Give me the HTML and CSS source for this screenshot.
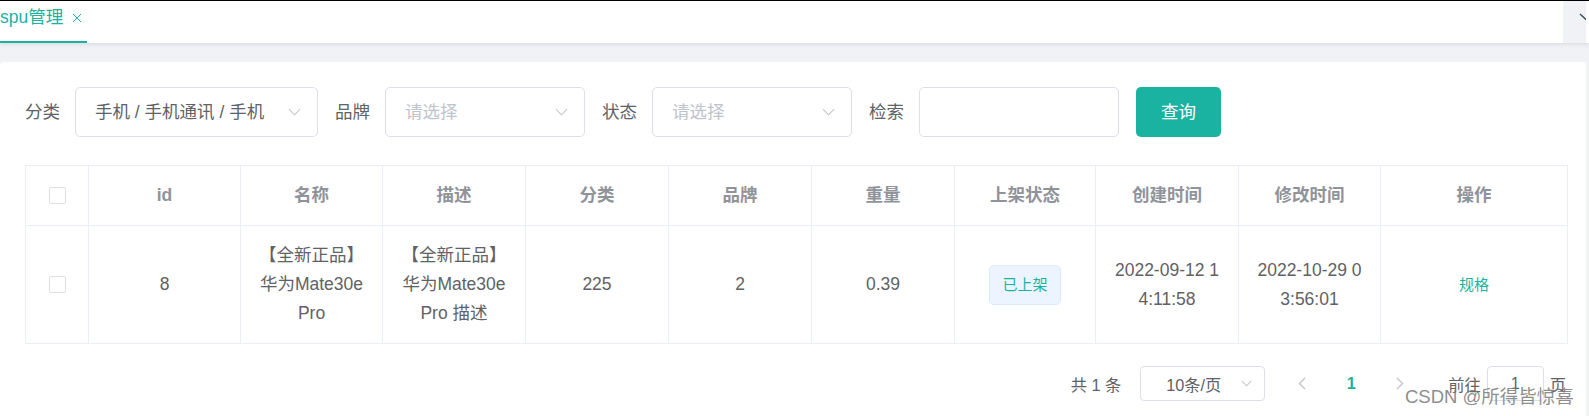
FILE: index.html
```html
<!DOCTYPE html>
<html lang="zh-CN">
<head>
  <meta charset="UTF-8">
  <meta name="viewport" content="width=device-width, initial-scale=1.0">
  <title>spu管理</title>
  <link rel="stylesheet" href="styles.css">
</head>
<body>
  <div class="tags-bar">
    <div class="tags-list">
      <span class="tag-item active">spu管理
        <svg class="tag-close" viewBox="0 0 10 10"><path d="M1 1L9 9M9 1L1 9"/></svg>
      </span>
    </div>
    <div class="tags-tool">
      <svg viewBox="0 0 23 42"><path d="M17 13L24 19.5"/></svg>
    </div>
  </div>

  <div class="app-main">
    <div class="page-card">
      <div class="search-form">
        <div class="form-item">
          <label class="form-label">分类</label>
          <div class="select select-wide">
            <span class="select-value">手机 / 手机通讯 / 手机</span>
            <svg class="select-arrow" viewBox="0 0 14 8"><path d="M1 1L7 7L13 1"/></svg>
          </div>
        </div>
        <div class="form-item">
          <label class="form-label">品牌</label>
          <div class="select">
            <span class="placeholder">请选择</span>
            <svg class="select-arrow" viewBox="0 0 14 8"><path d="M1 1L7 7L13 1"/></svg>
          </div>
        </div>
        <div class="form-item">
          <label class="form-label">状态</label>
          <div class="select">
            <span class="placeholder">请选择</span>
            <svg class="select-arrow" viewBox="0 0 14 8"><path d="M1 1L7 7L13 1"/></svg>
          </div>
        </div>
        <div class="form-item">
          <label class="form-label">检索</label>
          <div class="text-input"></div>
        </div>
        <button class="btn-primary" type="button">查询</button>
      </div>

      <table class="data-table">
        <colgroup>
          <col style="width: 63px">
          <col style="width: 152px">
          <col style="width: 142px">
          <col style="width: 143px">
          <col style="width: 143px">
          <col style="width: 143px">
          <col style="width: 143px">
          <col style="width: 141px">
          <col style="width: 143px">
          <col style="width: 142px">
          <col>
        </colgroup>
        <thead>
          <tr>
            <th><span class="checkbox"></span></th>
            <th>id</th>
            <th>名称</th>
            <th>描述</th>
            <th>分类</th>
            <th>品牌</th>
            <th>重量</th>
            <th>上架状态</th>
            <th>创建时间</th>
            <th>修改时间</th>
            <th>操作</th>
          </tr>
        </thead>
        <tbody>
          <tr>
            <td><span class="checkbox"></span></td>
            <td>8</td>
            <td>【全新正品】华为Mate30e Pro</td>
            <td>【全新正品】华为Mate30e Pro 描述</td>
            <td>225</td>
            <td>2</td>
            <td>0.39</td>
            <td><span class="status-tag">已上架</span></td>
            <td>2022-09-12 14:11:58</td>
            <td>2022-10-29 03:56:01</td>
            <td><a class="link-btn">规格</a></td>
          </tr>
        </tbody>
      </table>

      <div class="pagination">
        <span class="total">共 1 条</span>
        <div class="size-select">
          <span>10条/页</span>
          <svg class="size-arrow" viewBox="0 0 12 7"><path d="M1 1L6 6L11 1"/></svg>
        </div>
        <button class="page-btn" type="button" disabled>
          <svg viewBox="0 0 8 13"><path d="M7 1L1.5 6.5L7 12"/></svg>
        </button>
        <span class="pager-num active">1</span>
        <button class="page-btn" type="button" disabled>
          <svg viewBox="0 0 8 13"><path d="M1 1L6.5 6.5L1 12"/></svg>
        </button>
        <span class="jumper">前往</span>
        <div class="jump-input">1</div>
        <span class="jump-unit">页</span>
      </div>
    </div>
  </div>

  <div class="watermark">CSDN @所得皆惊喜</div>
</body>
</html>
```

FILE: styles.css
```css
* {
  box-sizing: border-box;
}

body {
  margin: 0;
  height: 416px;
  overflow: hidden;
  border-top: 1px solid #000;
  background: #f0f2f5;
  font-family: "Liberation Sans", "Noto Sans CJK SC", sans-serif;
  color: #606266;
  position: relative;
}

/* tags view */
.tags-bar {
  display: flex;
  height: 42px;
  background: #fff;
  box-shadow: 0 1px 4px rgba(0, 21, 41, 0.12);
  position: relative;
  z-index: 1;
}

.tags-list {
  flex: 1;
}

.tag-item {
  display: inline-flex;
  align-items: center;
  height: 42px;
  padding: 0 5px 7px 0;
  border-bottom: 2px solid #1ab3a1;
  color: #1ab3a1;
  font-size: 17.5px;
  line-height: 33px;
}

.tag-close {
  width: 10px;
  height: 10px;
  margin-left: 9px;
  fill: none;
  stroke: #1ab3a1;
  stroke-width: 1;
}

.tags-tool {
  width: 23px;
  margin-right: 3px;
  background: #f0f2f5;
}

.tags-tool svg {
  display: block;
  width: 23px;
  height: 42px;
  fill: none;
  stroke: #3d4b5e;
  stroke-width: 1.4;
}

/* main card */
.app-main {
  width: 1586px;
  padding-top: 19px;
}

.page-card {
  height: 354px;
  background: #fff;
  border-radius: 4px 4px 0 0;
  padding: 25px 18px 0 25px;
}

.search-form {
  display: flex;
  align-items: center;
  margin-bottom: 28px;
}

.form-item {
  display: flex;
  align-items: center;
  margin-right: 17px;
}

.form-label {
  padding-right: 15px;
  font-size: 17.5px;
  line-height: 50px;
  color: #606266;
}

.select,
.text-input {
  width: 200px;
  height: 50px;
  border: 1px solid #dcdfe6;
  border-radius: 5px;
  background: #fff;
}

.select {
  display: flex;
  align-items: center;
  justify-content: space-between;
  padding: 0 16px 0 19px;
  font-size: 17.5px;
  line-height: 48px;
}

.select-wide {
  width: 243px;
}

.select-value {
  color: #606266;
  white-space: nowrap;
}

.placeholder {
  color: #c0c4cc;
}

.select-arrow {
  width: 13px;
  height: 8px;
  fill: none;
  stroke: #c0c4cc;
  stroke-width: 1.2;
}

.btn-primary {
  height: 50px;
  padding: 0 25px;
  border: none;
  border-radius: 5px;
  background: #1ab3a1;
  color: #fff;
  font-family: inherit;
  font-size: 17.5px;
  line-height: 50px;
}

/* table */
.data-table {
  width: 1543px;
  table-layout: fixed;
  border-collapse: separate;
  border-spacing: 0;
  border-top: 1px solid #ebeef5;
  border-left: 1px solid #ebeef5;
  font-size: 17.5px;
}

.data-table th,
.data-table td {
  padding: 15px 15px;
  border-right: 1px solid #ebeef5;
  border-bottom: 1px solid #ebeef5;
  line-height: 29px;
  text-align: center;
  word-break: break-all;
}

.data-table th {
  color: #909399;
  font-weight: bold;
}

.data-table td {
  color: #606266;
}

.data-table th:first-child,
.data-table td:first-child {
  padding: 15px 0;
}

.checkbox {
  display: inline-block;
  width: 17px;
  height: 17px;
  border: 1px solid #dcdfe6;
  border-radius: 2px;
  background: #fff;
  vertical-align: middle;
  position: relative;
  top: -1px;
}

.status-tag {
  display: inline-block;
  height: 40px;
  padding: 0 12px;
  border: 1px solid #d9ecff;
  border-radius: 5px;
  background: #ecf5ff;
  color: #1ab3a1;
  font-size: 15px;
  line-height: 38px;
  white-space: nowrap;
}

.link-btn {
  color: #1ab3a1;
  font-size: 15px;
}

/* pagination */
.pagination {
  display: flex;
  align-items: center;
  justify-content: flex-end;
  height: 35px;
  margin-top: 22px;
  padding-right: 2px;
  font-size: 16.25px;
  color: #606266;
}

.total {
  margin-right: 19px;
  white-space: nowrap;
}

.size-select {
  display: flex;
  align-items: center;
  width: 125px;
  height: 35px;
  margin-right: 15px;
  padding: 0 12px 0 25px;
  border: 1px solid #dcdfe6;
  border-radius: 4px;
  justify-content: space-between;
}

.size-arrow {
  width: 11px;
  height: 7px;
  fill: none;
  stroke: #c0c4cc;
  stroke-width: 1.1;
}

.page-btn {
  display: flex;
  align-items: center;
  justify-content: center;
  width: 44px;
  height: 35px;
  padding: 0;
  border: none;
  background: #fff;
}

.page-btn svg {
  width: 8px;
  height: 13px;
  fill: none;
  stroke: #c0c4cc;
  stroke-width: 1.4;
}

.pager-num {
  width: 44px;
  margin: 0 5px;
  text-align: center;
  font-weight: bold;
  line-height: 35px;
}

.pager-num.active {
  color: #1ab3a1;
}

.jumper {
  margin-left: 26px;
  margin-right: 6px;
}

.jump-input {
  width: 57px;
  height: 35px;
  border: 1px solid #dcdfe6;
  border-radius: 4px;
  text-align: center;
  line-height: 33px;
}

.jump-unit {
  margin-left: 6px;
}

.watermark {
  position: absolute;
  left: 1405px;
  top: 385px;
  font-size: 18.5px;
  line-height: 22px;
  color: rgba(120, 120, 120, 0.85);
  white-space: nowrap;
}
```
